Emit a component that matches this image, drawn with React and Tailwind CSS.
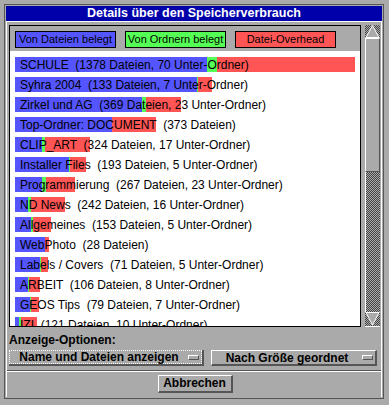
const rows = [
  { name: "SCHULE", info: "(1378 Dateien, 70 Unter-Ordner)", b: 192, g: 10, r: 138 },
  { name: "Syhra 2004", info: "(133 Dateien, 7 Unter-Ordner)", b: 182, g: 1, r: 14 },
  { name: "Zirkel und AG", info: "(369 Dateien, 23 Unter-Ordner)", b: 127, g: 4, r: 35 },
  { name: "Top-Ordner: DOCUMENT", info: "(373 Dateien)", b: 97, g: 0, r: 44 },
  { name: "CLIP_ART", info: "(324 Dateien, 17 Unter-Ordner)", b: 27, g: 3, r: 45 },
  { name: "Installer Files", info: "(193 Dateien, 5 Unter-Ordner)", b: 54, g: 1, r: 16 },
  { name: "Programmierung", info: "(267 Dateien, 23 Unter-Ordner)", b: 27, g: 4, r: 29 },
  { name: "ND News", info: "(242 Dateien, 16 Unter-Ordner)", b: 13, g: 3, r: 34 },
  { name: "Allgemeines", info: "(153 Dateien, 5 Unter-Ordner)", b: 16, g: 2, r: 18 },
  { name: "WebPhoto", info: "(28 Dateien)", b: 30, g: 0, r: 4 },
  { name: "Labels / Covers", info: "(71 Dateien, 5 Unter-Ordner)", b: 25, g: 1, r: 7 },
  { name: "ARBEIT", info: "(106 Dateien, 8 Unter-Ordner)", b: 13, g: 1, r: 11 },
  { name: "GEOS Tips", info: "(79 Dateien, 7 Unter-Ordner)", b: 15, g: 1, r: 8 },
  { name: "IZI", info: "(121 Dateien, 10 Unter-Ordner)", b: 4, g: 2, r: 16 },
];

function Dash() {
  return (
    <div className="w-[11px] h-[5px] bg-[#aaaaaa] border-t border-l border-white border-b border-r border-b-[#555555] border-r-[#555555]" />
  );
}

export default function App() {
  const checker =
    "bg-[repeating-conic-gradient(#444444_0%_25%,#aaaaaa_0%_50%)] bg-[length:2px_2px]";
  return (
    <div className="w-[389px] h-[405px] bg-[#aaaaaa] p-[4px] font-['Liberation_Sans',Arial,sans-serif] text-black overflow-hidden">
      <div className="w-[380px] h-[395px] border border-[#555555] p-[1px] flex flex-col">
        <div className="h-[15px] shrink-0 bg-[#0000aa] text-white font-bold text-[12.5px] leading-[15px] text-center">
          Details über den Speicherverbrauch
        </div>
        <div className="flex-1 border-t border-l border-r border-white pl-[2px] pt-[3px] flex flex-col">
          <div className="flex gap-[4px] h-[302px] shrink-0">
            <div className="w-[352px] h-[302px] border border-black flex flex-col">
              <div className="h-[25px] shrink-0 flex items-start pt-[5px] pl-[5px] gap-[9px]">
                <div className="w-[101px] h-[17px] border border-black bg-[#5555ff] text-[11px] leading-[15px] text-center whitespace-nowrap">
                  Von Dateien belegt
                </div>
                <div className="w-[101px] h-[17px] border border-black bg-[#55ff55] text-[11px] leading-[15px] text-center whitespace-nowrap">
                  Von Ordnern belegt
                </div>
                <div className="w-[101px] h-[17px] border border-black bg-[#ff5555] text-[11px] leading-[15px] text-center whitespace-nowrap">
                  Datei-Overhead
                </div>
              </div>
              <div className="flex-1 bg-white overflow-hidden pt-[6px] pl-[5px] flex flex-col gap-[5px]">
                {rows.map((row) => (
                  <div key={row.name} className="relative h-[15px] shrink-0">
                    <div className="flex h-[15px]">
                      <div className="h-full bg-[#5555ff]" style={{ width: row.b }} />
                      <div className="h-full bg-[#55ff55]" style={{ width: row.g }} />
                      <div className="h-full bg-[#ff5555]" style={{ width: row.r }} />
                    </div>
                    <div className="absolute left-[5px] top-0 text-[12px] leading-[16px] whitespace-pre">
                      {row.name + "  " + row.info}
                    </div>
                  </div>
                ))}
              </div>
            </div>
            <div className="w-[15px] h-[302px] flex flex-col border-b border-white">
              <div className={"h-[13px] shrink-0 " + checker}>
                <svg width="15" height="13" viewBox="0 0 15 13" className="block">
                  <polygon points="7.5,0.5 1,12.5 14,12.5" fill="#aaaaaa" stroke="#ffffff" strokeWidth="1" />
                </svg>
              </div>
              <div className="h-[134px] shrink-0 bg-[#aaaaaa] border-t border-l border-white border-r border-b border-r-[#555555] border-b-[#555555]" />
              <div className={"flex-1 border-l border-white " + checker} />
              <div className={"h-[14px] shrink-0 " + checker}>
                <svg width="15" height="14" viewBox="0 0 15 14" className="block">
                  <polygon points="1,0.5 14,0.5 7.5,13" fill="#aaaaaa" stroke="#ffffff" strokeWidth="1" />
                </svg>
              </div>
            </div>
          </div>
          <div className="mt-[5px] h-[16px] shrink-0 text-[12px] leading-[16px] font-bold">Anzeige-Optionen:</div>
          <div className="mt-[2px] flex gap-[7px] shrink-0">
            <div className="w-[195px] h-[16px] border-r-2 border-b-2 border-[#555555]">
              <div className="h-full border border-dotted border-white flex items-center">
                <div className="flex-1 text-center text-[12px] font-bold leading-[14px]">Name und Dateien anzeigen</div>
                <div className="mr-[2px]">
                  <Dash />
                </div>
              </div>
            </div>
            <div className="w-[166px] h-[16px] border-t border-l border-white border-r-2 border-b-2 border-r-[#555555] border-b-[#555555] flex items-center">
              <div className="flex-1 text-center text-[12px] font-bold leading-[14px]">Nach Größe geordnet</div>
              <div className="mr-[2px]">
                <Dash />
              </div>
            </div>
          </div>
          <div className="mt-[4px] -ml-[2px] w-[374px] h-[2px] shrink-0 border-t border-[#555555] border-b border-b-white" />
          <div className="mt-[3px] self-center w-[75px] h-[18px] shrink-0 border-t border-l border-white border-r-2 border-b-2 border-r-[#555555] border-b-[#555555] text-[12px] font-bold leading-[15px] text-center">
            Abbrechen
          </div>
        </div>
      </div>
    </div>
  );
}
